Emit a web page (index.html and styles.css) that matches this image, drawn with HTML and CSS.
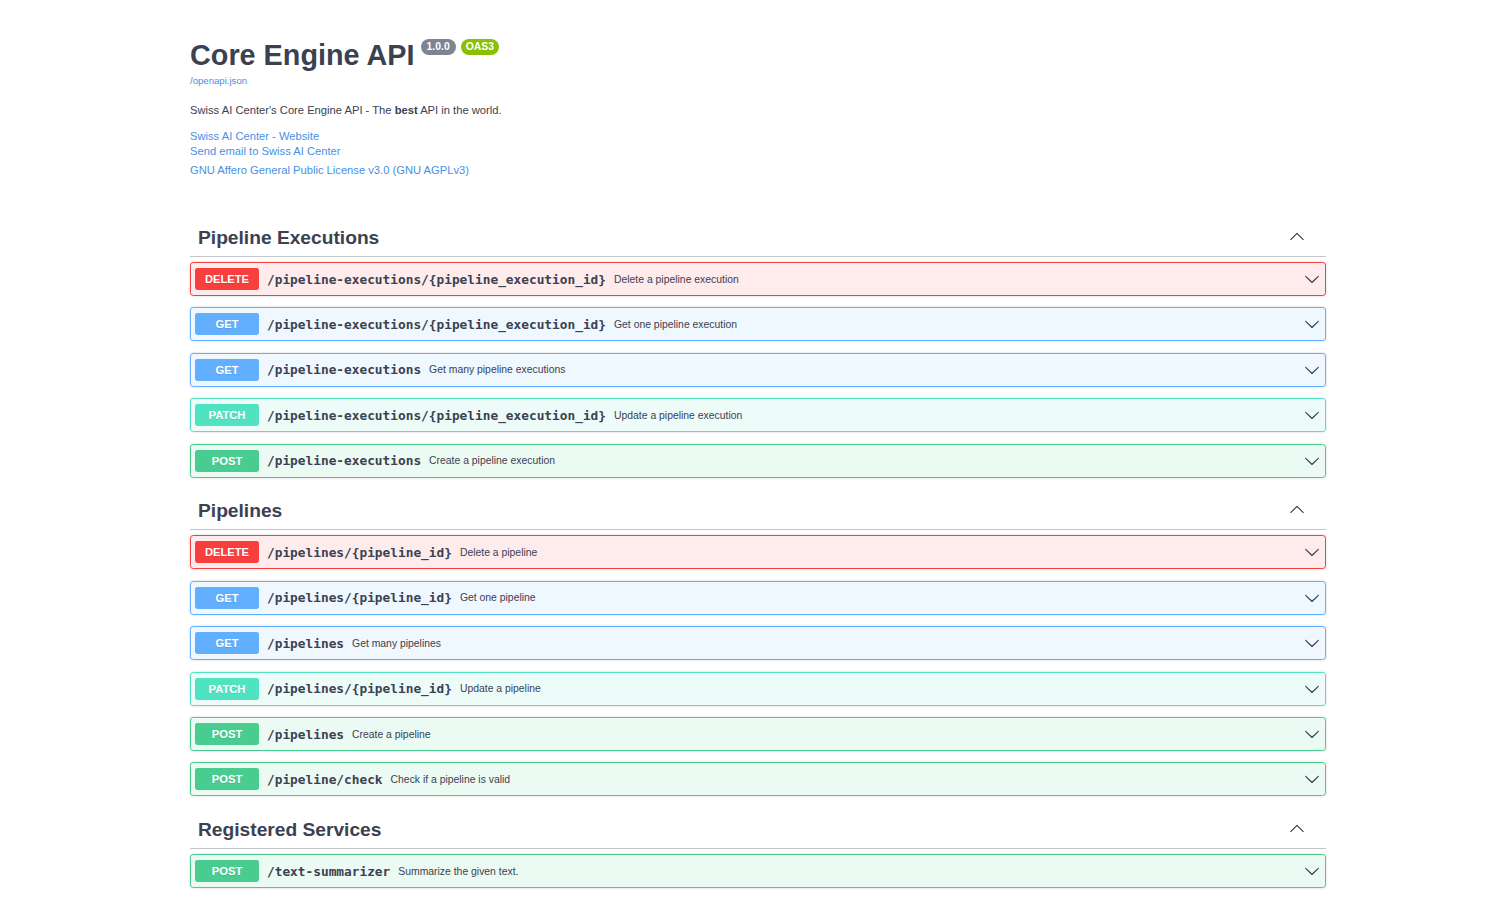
FILE: index.html
```html
<!DOCTYPE html>
<html lang="en">
<head>
<meta charset="utf-8">
<title>Core Engine API</title>
<link rel="stylesheet" href="styles.css">
</head>
<body>
<div class="wrapper">
  <div class="info">
    <div class="title-row">
      <h2 class="title">Core Engine API</h2>
      <span class="badge badge-version">1.0.0</span>
      <span class="badge badge-oas">OAS3</span>
    </div>
    <a class="url" href="#">/openapi.json</a>
    <p class="desc">Swiss AI Center's Core Engine API - The <b>best</b> API in the world.</p>
    <div class="contact">
      <a href="#">Swiss AI Center - Website</a>
      <a href="#">Send email to Swiss AI Center</a>
    </div>
    <div class="license"><a href="#">GNU Affero General Public License v3.0 (GNU AGPLv3)</a></div>
  </div>

  <section class="tag-section">
    <div class="tag-header">
      <h3>Pipeline Executions</h3>
      <svg class="arrow" viewBox="0 0 20 20"><path d="M17.418 14.908c.272.268.709.268.979 0s.271-.701 0-.969l-7.908-7.83c-.27-.268-.707-.268-.979 0l-7.908 7.83c-.27.268-.27.701 0 .969.271.268.709.268.979 0L10 7.767l7.418 7.141z"/></svg>
    </div>
    <div class="opblock delete"><span class="method">DELETE</span><span class="path">/pipeline-executions/{pipeline_execution_id}</span><span class="summary">Delete a pipeline execution</span><svg class="arrow" viewBox="0 0 20 20"><path d="M17.418 6.109c.272-.268.709-.268.979 0s.271.701 0 .969l-7.908 7.83c-.27.268-.707.268-.979 0l-7.908-7.83c-.27-.268-.27-.701 0-.969.271-.268.709-.268.979 0L10 13.25l7.418-7.141z"/></svg></div>
    <div class="opblock get"><span class="method">GET</span><span class="path">/pipeline-executions/{pipeline_execution_id}</span><span class="summary">Get one pipeline execution</span><svg class="arrow" viewBox="0 0 20 20"><path d="M17.418 6.109c.272-.268.709-.268.979 0s.271.701 0 .969l-7.908 7.83c-.27.268-.707.268-.979 0l-7.908-7.83c-.27-.268-.27-.701 0-.969.271-.268.709-.268.979 0L10 13.25l7.418-7.141z"/></svg></div>
    <div class="opblock get"><span class="method">GET</span><span class="path">/pipeline-executions</span><span class="summary">Get many pipeline executions</span><svg class="arrow" viewBox="0 0 20 20"><path d="M17.418 6.109c.272-.268.709-.268.979 0s.271.701 0 .969l-7.908 7.83c-.27.268-.707.268-.979 0l-7.908-7.83c-.27-.268-.27-.701 0-.969.271-.268.709-.268.979 0L10 13.25l7.418-7.141z"/></svg></div>
    <div class="opblock patch"><span class="method">PATCH</span><span class="path">/pipeline-executions/{pipeline_execution_id}</span><span class="summary">Update a pipeline execution</span><svg class="arrow" viewBox="0 0 20 20"><path d="M17.418 6.109c.272-.268.709-.268.979 0s.271.701 0 .969l-7.908 7.83c-.27.268-.707.268-.979 0l-7.908-7.83c-.27-.268-.27-.701 0-.969.271-.268.709-.268.979 0L10 13.25l7.418-7.141z"/></svg></div>
    <div class="opblock post"><span class="method">POST</span><span class="path">/pipeline-executions</span><span class="summary">Create a pipeline execution</span><svg class="arrow" viewBox="0 0 20 20"><path d="M17.418 6.109c.272-.268.709-.268.979 0s.271.701 0 .969l-7.908 7.83c-.27.268-.707.268-.979 0l-7.908-7.83c-.27-.268-.27-.701 0-.969.271-.268.709-.268.979 0L10 13.25l7.418-7.141z"/></svg></div>
  </section>

  <section class="tag-section">
    <div class="tag-header">
      <h3>Pipelines</h3>
      <svg class="arrow" viewBox="0 0 20 20"><path d="M17.418 14.908c.272.268.709.268.979 0s.271-.701 0-.969l-7.908-7.83c-.27-.268-.707-.268-.979 0l-7.908 7.83c-.27.268-.27.701 0 .969.271.268.709.268.979 0L10 7.767l7.418 7.141z"/></svg>
    </div>
    <div class="opblock delete"><span class="method">DELETE</span><span class="path">/pipelines/{pipeline_id}</span><span class="summary">Delete a pipeline</span><svg class="arrow" viewBox="0 0 20 20"><path d="M17.418 6.109c.272-.268.709-.268.979 0s.271.701 0 .969l-7.908 7.83c-.27.268-.707.268-.979 0l-7.908-7.83c-.27-.268-.27-.701 0-.969.271-.268.709-.268.979 0L10 13.25l7.418-7.141z"/></svg></div>
    <div class="opblock get"><span class="method">GET</span><span class="path">/pipelines/{pipeline_id}</span><span class="summary">Get one pipeline</span><svg class="arrow" viewBox="0 0 20 20"><path d="M17.418 6.109c.272-.268.709-.268.979 0s.271.701 0 .969l-7.908 7.83c-.27.268-.707.268-.979 0l-7.908-7.83c-.27-.268-.27-.701 0-.969.271-.268.709-.268.979 0L10 13.25l7.418-7.141z"/></svg></div>
    <div class="opblock get"><span class="method">GET</span><span class="path">/pipelines</span><span class="summary">Get many pipelines</span><svg class="arrow" viewBox="0 0 20 20"><path d="M17.418 6.109c.272-.268.709-.268.979 0s.271.701 0 .969l-7.908 7.83c-.27.268-.707.268-.979 0l-7.908-7.83c-.27-.268-.27-.701 0-.969.271-.268.709-.268.979 0L10 13.25l7.418-7.141z"/></svg></div>
    <div class="opblock patch"><span class="method">PATCH</span><span class="path">/pipelines/{pipeline_id}</span><span class="summary">Update a pipeline</span><svg class="arrow" viewBox="0 0 20 20"><path d="M17.418 6.109c.272-.268.709-.268.979 0s.271.701 0 .969l-7.908 7.83c-.27.268-.707.268-.979 0l-7.908-7.83c-.27-.268-.27-.701 0-.969.271-.268.709-.268.979 0L10 13.25l7.418-7.141z"/></svg></div>
    <div class="opblock post"><span class="method">POST</span><span class="path">/pipelines</span><span class="summary">Create a pipeline</span><svg class="arrow" viewBox="0 0 20 20"><path d="M17.418 6.109c.272-.268.709-.268.979 0s.271.701 0 .969l-7.908 7.83c-.27.268-.707.268-.979 0l-7.908-7.83c-.27-.268-.27-.701 0-.969.271-.268.709-.268.979 0L10 13.25l7.418-7.141z"/></svg></div>
    <div class="opblock post"><span class="method">POST</span><span class="path">/pipeline/check</span><span class="summary">Check if a pipeline is valid</span><svg class="arrow" viewBox="0 0 20 20"><path d="M17.418 6.109c.272-.268.709-.268.979 0s.271.701 0 .969l-7.908 7.83c-.27.268-.707.268-.979 0l-7.908-7.83c-.27-.268-.27-.701 0-.969.271-.268.709-.268.979 0L10 13.25l7.418-7.141z"/></svg></div>
  </section>

  <section class="tag-section">
    <div class="tag-header">
      <h3>Registered Services</h3>
      <svg class="arrow" viewBox="0 0 20 20"><path d="M17.418 14.908c.272.268.709.268.979 0s.271-.701 0-.969l-7.908-7.83c-.27-.268-.707-.268-.979 0l-7.908 7.83c-.27.268-.27.701 0 .969.271.268.709.268.979 0L10 7.767l7.418 7.141z"/></svg>
    </div>
    <div class="opblock post"><span class="method">POST</span><span class="path">/text-summarizer</span><span class="summary">Summarize the given text.</span><svg class="arrow" viewBox="0 0 20 20"><path d="M17.418 6.109c.272-.268.709-.268.979 0s.271.701 0 .969l-7.908 7.83c-.27.268-.707.268-.979 0l-7.908-7.83c-.27-.268-.27-.701 0-.969.271-.268.709-.268.979 0L10 13.25l7.418-7.141z"/></svg></div>
  </section>
</div>
</body>
</html>
```

FILE: styles.css
```css
html, body {
  margin: 0;
  padding: 0;
  background: #fff;
}
body {
  font-family: "Liberation Sans", Helvetica, Arial, sans-serif;
  color: #3b4151;
}
.wrapper {
  width: 1136px;
  margin-left: 190px;
}
.info {
  padding-top: 37px;
  padding-bottom: 46px;
}
.title-row {
  display: flex;
  align-items: flex-start;
}
.title {
  margin: 0;
  font-size: 28.8px;
  line-height: 36px;
  font-weight: 700;
  color: #3b4151;
}
.badge {
  display: inline-block;
  height: 16px;
  line-height: 16px;
  border-radius: 46px;
  color: #fff;
  font-size: 10.4px;
  font-weight: 700;
  padding: 0 5px;
  margin-top: 2px;
  margin-left: 5px;
}
.badge-version {
  background: #7d8492;
  padding: 0 6px;
  margin-left: 6px;
}
.badge-oas {
  background: #89bf04;
}
a {
  color: #4990e2;
  text-decoration: none;
}
.url {
  display: block;
  font-size: 9.6px;
  line-height: 14px;
  margin-top: 1px;
}
.desc {
  margin: 15px 0 0;
  font-size: 11.2px;
  line-height: 14px;
}
.desc b {
  font-weight: 700;
}
.contact {
  margin-top: 12px;
  display: flex;
  flex-direction: column;
  font-size: 11.2px;
  line-height: 15px;
}
.license {
  margin-top: 4px;
  font-size: 11.2px;
  line-height: 15px;
}
.tag-section {
  padding-bottom: 8.5px;
}
.tag-header {
  display: flex;
  align-items: center;
  justify-content: space-between;
  height: 32px;
  padding: 0 21px 0 8px;
  border-bottom: 1px solid rgba(59, 65, 81, 0.3);
  margin-bottom: 5px;
}
.tag-header h3 {
  margin: 0;
  font-size: 19.2px;
  font-weight: 700;
  line-height: 24px;
  padding-bottom: 4px;
  color: #3b4151;
}
.tag-header .arrow {
  width: 16px;
  height: 16px;
  fill: #3b4151;
  margin-bottom: 8px;
}
.opblock {
  display: flex;
  align-items: center;
  height: 34px;
  box-sizing: border-box;
  padding: 0 5px 0 4px;
  border: 1px solid;
  border-radius: 3.2px;
  margin-bottom: 11.4px;
  box-shadow: 0 0 2.4px rgba(0, 0, 0, 0.19);
}
.method {
  flex: none;
  width: 64px;
  height: 22px;
  line-height: 22px;
  text-align: center;
  color: #fff;
  font-size: 11.2px;
  font-weight: 700;
  border-radius: 2.4px;
  text-shadow: 0 1px 0 rgba(0, 0, 0, 0.1);
}
.path {
  margin-left: 8px;
  font-family: "DejaVu Sans Mono", Menlo, monospace;
  font-size: 12.8px;
  font-weight: 700;
  color: #3b4151;
}
.summary {
  margin-left: 8px;
  font-size: 10.4px;
  color: #3b4151;
  flex: 1;
}
.opblock .arrow {
  flex: none;
  width: 16px;
  height: 16px;
  fill: #3b4151;
}
.delete {
  background: rgba(249, 62, 62, 0.1);
  border-color: #f93e3e;
}
.delete .method { background: #f93e3e; }
.get {
  background: rgba(97, 175, 254, 0.1);
  border-color: #61affe;
}
.get .method { background: #61affe; }
.patch {
  background: rgba(80, 227, 194, 0.1);
  border-color: #50e3c2;
}
.patch .method { background: #50e3c2; }
.post {
  background: rgba(73, 204, 144, 0.1);
  border-color: #49cc90;
}
.post .method { background: #49cc90; }
```
